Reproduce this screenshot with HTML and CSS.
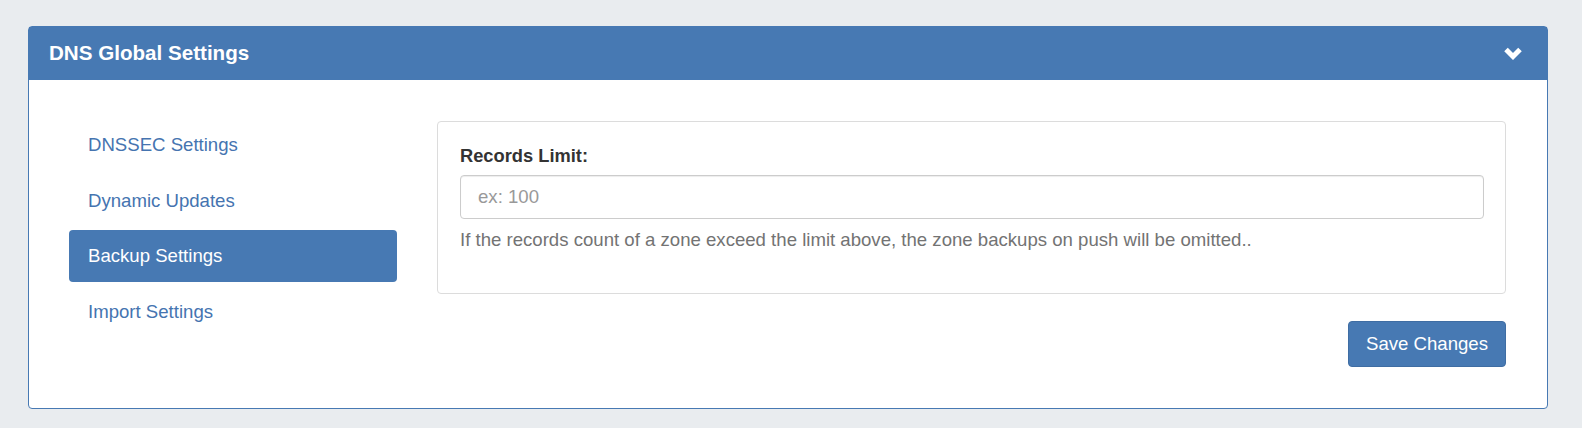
FILE: index.html
```html
<!DOCTYPE html>
<html lang="en">
<head>
    <meta charset="UTF-8">
    <meta name="viewport" content="width=device-width, initial-scale=1.0">
    <title>DNS Global Settings</title>
    <link rel="stylesheet" href="styles.css">
</head>
<body>

    <div class="panel">
        <div class="panel-heading">
            <h3 class="panel-title">DNS Global Settings</h3>
            <svg class="chevron" width="20" height="14" viewBox="0 0 20 14">
                <polyline points="3,3.5 10,10.5 17,3.5" fill="none" stroke="#fff" stroke-width="5" stroke-linejoin="miter" stroke-linecap="butt"/>
            </svg>
        </div>
        <div class="panel-body">
            <ul class="nav-pills">
                <li><a href="#">DNSSEC Settings</a></li>
                <li><a href="#">Dynamic Updates</a></li>
                <li class="active"><a href="#">Backup Settings</a></li>
                <li><a href="#">Import Settings</a></li>
            </ul>
            <div class="content">
                <div class="well">
                    <label for="recordsLimit">Records Limit:</label>
                    <input type="text" id="recordsLimit" placeholder="ex: 100">
                    <p class="help">If the records count of a zone exceed the limit above, the zone backups on push will be omitted..</p>
                </div>
                <div class="actions">
                    <button type="button">Save Changes</button>
                </div>
            </div>
        </div>
    </div>

</body>
</html>
```

FILE: styles.css
```css
/* General reset */
* {
    margin: 0;
    padding: 0;
    box-sizing: border-box;
    font-family: "Liberation Sans", Arial, sans-serif;
}

body {
    background-color: #e9ecef;
    padding: 26px 34px 0 28px;
    font-size: 18.3px;
    color: #333;
}

.panel {
    background-color: #fff;
    border: 1px solid #4779b3;
    border-radius: 4px;
}

.panel-heading {
    display: flex;
    justify-content: space-between;
    align-items: center;
    height: 53px;
    padding: 0 24px 0 20px;
    background-color: #4779b3;
    color: #fff;
}

.panel-title {
    font-size: 20.6px;
    font-weight: bold;
    margin-top: -1px;
}

.chevron {
    display: block;
    margin-top: -1px;
}

.panel-body {
    display: flex;
    gap: 40px;
    padding: 39px 41px 41px 40px;
}

.nav-pills {
    list-style: none;
    width: 328px;
    flex-shrink: 0;
    display: flex;
    flex-direction: column;
    gap: 3.5px;
}

.nav-pills a {
    display: block;
    height: 52px;
    line-height: 26px;
    padding: 13px 19px;
    border-radius: 4px;
    font-size: 18.6px;
    color: #4574b0;
    text-decoration: none;
}

.nav-pills .active a {
    background-color: #4779b3;
    color: #fff;
}

.content {
    flex: 1;
    padding-top: 2px;
}

.well {
    border: 1px solid #dcdcdc;
    border-radius: 4px;
    padding: 21px 21px 40px 22px;
}

label {
    display: block;
    font-weight: bold;
    line-height: 26px;
    margin-bottom: 6px;
}

input {
    display: block;
    width: 100%;
    height: 44px;
    padding: 0 17px;
    border: 1px solid #ccc;
    border-radius: 4px;
    font-size: 18.6px;
    color: #555;
    box-shadow: inset 0 1px 1px rgba(0, 0, 0, 0.075);
}

input::placeholder {
    color: #999;
}

.help {
    margin-top: 8px;
    line-height: 26px;
    font-size: 18.6px;
    color: #737373;
}

.actions {
    display: flex;
    justify-content: flex-end;
    margin-top: 27px;
}

button {
    height: 46px;
    padding: 0 17px;
    background-color: #4779b3;
    color: #fff;
    border: 1px solid #3f6da3;
    border-radius: 4px;
    font-size: 18.6px;
    cursor: pointer;
}
```
